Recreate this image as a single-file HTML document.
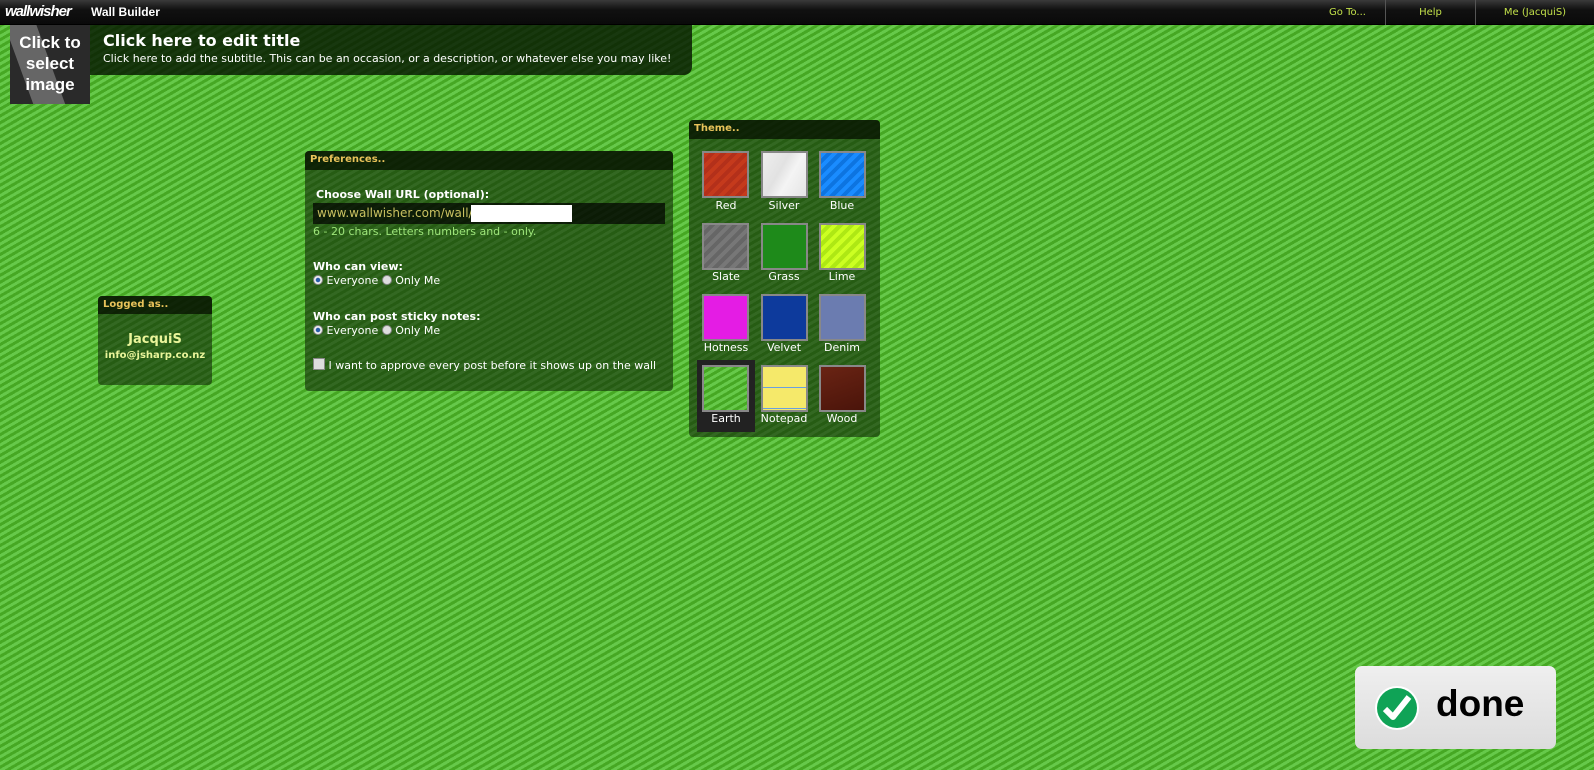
<!DOCTYPE html>
<html><head><meta charset="utf-8"><style>
*{margin:0;padding:0;box-sizing:border-box}
body{width:1594px;height:770px;overflow:hidden;font-family:"DejaVu Sans","Liberation Sans",sans-serif;
background:repeating-linear-gradient(150deg,#66c94a 0 3px,#46a823 3px 6px);position:relative}
.top{position:absolute;left:0;top:0;width:1594px;height:25px;background:linear-gradient(#3a3a3a,#111 40%,#0a0a0a);border-bottom:1px solid #000}
.logo{position:absolute;left:5px;top:3px;color:#fff;font:bold italic 15px "Liberation Sans",sans-serif;letter-spacing:-1px}
.wb{position:absolute;left:91px;top:5px;color:#fff;font:bold 12px "Liberation Sans",sans-serif}
.nav{position:absolute;top:0;height:25px;color:#c2e04a;font-size:10px;line-height:25px;text-align:center;border-left:1px solid #555}
.panel{position:absolute;background:rgba(20,45,10,.62);border-radius:4px;color:#fff}
.ph{height:18px;background:rgba(5,15,0,.75);color:#e8c35a;font-weight:bold;font-size:10px;line-height:18px;padding-left:5px;border-radius:4px 4px 0 0}
.sw{position:absolute;width:47px;height:47px;border:2px solid #888}
.lab{position:absolute;width:58px;text-align:center;font-size:11px;color:#fff}
.rad{display:inline-block;width:10px;height:10px;border-radius:50%;background:#ddd;border:1px solid #888;vertical-align:-1px}
.rad.on{background:radial-gradient(#2a5ea8 35%,#eee 45%)}
</style></head><body>
<div class="top">
<div class="logo">wallwisher</div><div class="wb">Wall Builder</div>
<div class="nav" style="left:1280px;width:105px;border:none;padding-left:30px">Go To...</div>
<div class="nav" style="left:1385px;width:90px">Help</div>
<div class="nav" style="left:1475px;width:119px">Me (JacquiS)</div>
</div>
<div style="position:absolute;left:90px;top:25px;width:602px;height:50px;background:rgba(5,20,0,.8);border-radius:0 0 8px 0"></div>
<div style="position:absolute;left:103px;top:31px;color:#fff;font-weight:bold;font-size:16px">Click here to edit title</div>
<div style="position:absolute;left:103px;top:52px;color:#fff;font-size:11px">Click here to add the subtitle. This can be an occasion, or a description, or whatever else you may like!</div>
<div style="position:absolute;left:10px;top:25px;width:80px;height:79px;background:#2a2a2a;overflow:hidden">
<div style="position:absolute;left:10px;top:-10px;width:30px;height:100px;background:#666;transform:rotate(-20deg)"></div>
<div style="position:absolute;left:0;top:7px;width:80px;text-align:center;color:#fff;font:bold 17px/21px 'Liberation Sans Narrow','Liberation Sans',sans-serif">Click to<br>select<br>image</div></div>

<div class="panel" style="left:98px;top:296px;width:114px;height:89px">
<div class="ph">Logged as..</div>
<div style="text-align:center;color:#eaf59a;font-weight:bold;font-size:13px;margin-top:18px">JacquiS</div>
<div style="text-align:center;color:#eaf59a;font-weight:bold;font-size:10px;margin-top:3px">info@jsharp.co.nz</div>
</div>

<div class="panel" style="left:305px;top:151px;width:368px;height:240px;font-size:11px">
<div class="ph" style="height:19px">Preferences..</div>
<div style="position:absolute;left:11px;top:37px;font-weight:bold">Choose Wall URL (optional):</div>
<div style="position:absolute;left:8px;top:52px;width:352px;height:21px;background:rgba(0,0,0,.7);color:#c8c060;font-size:12px;line-height:21px;padding-left:4px">www.wallwisher.com/wall/<span style="position:absolute;left:158px;top:2px;width:101px;height:17px;background:#fff"></span></div>
<div style="position:absolute;left:8px;top:74px;color:#9ee67a">6 - 20 chars. Letters numbers and - only.</div>
<div style="position:absolute;left:8px;top:109px;font-weight:bold">Who can view:</div>
<div style="position:absolute;left:8px;top:123px"><span class="rad on"></span> Everyone <span class="rad"></span> Only Me</div>
<div style="position:absolute;left:8px;top:159px;font-weight:bold">Who can post sticky notes:</div>
<div style="position:absolute;left:8px;top:173px"><span class="rad on"></span> Everyone <span class="rad"></span> Only Me</div>
<div style="position:absolute;left:8px;top:207px"><span style="display:inline-block;width:12px;height:12px;background:#ddd;border:1px solid #888;vertical-align:-1px"></span> I want to approve every post before it shows up on the wall</div>
</div>

<div class="panel" style="left:689px;top:120px;width:191px;height:317px">
<div class="ph" style="height:19px">Theme..</div>
<div style="position:absolute;left:8px;top:240px;width:58px;height:72px;background:#222"></div>
<div class="sw" style="left:13px;top:31px;background:repeating-linear-gradient(135deg,#c53a1c 0 4px,#b3301a 4px 8px)"></div>
<div class="sw" style="left:72px;top:31px;background:linear-gradient(120deg,#eee,#e2e2e2 40%,#f4f4f4 60%,#e4e4e4)"></div>
<div class="sw" style="left:130px;top:31px;background:repeating-linear-gradient(135deg,#1a8cff 0 4px,#0d74e0 4px 8px)"></div>
<div class="sw" style="left:13px;top:103px;background:repeating-linear-gradient(135deg,#777 0 4px,#666 4px 8px)"></div>
<div class="sw" style="left:72px;top:103px;background:#1e8a1a"></div>
<div class="sw" style="left:130px;top:103px;background:repeating-linear-gradient(135deg,#ccff22 0 4px,#aee814 4px 8px)"></div>
<div class="sw" style="left:13px;top:174px;background:#e41ce4"></div>
<div class="sw" style="left:72px;top:174px;background:#0d3a9c"></div>
<div class="sw" style="left:130px;top:174px;background:#6b7cb0"></div>
<div class="sw" style="left:13px;top:245px;background:repeating-linear-gradient(150deg,#66c94a 0 3px,#46a823 3px 6px)"></div>
<div class="sw" style="left:72px;top:245px;background:linear-gradient(#f5e96a 0 20px,#6aa0e0 20px 21px,#f5e96a 21px 41px,#6aa0e0 41px 42px,#f5e96a 42px)"></div>
<div class="sw" style="left:130px;top:245px;background:linear-gradient(160deg,#6a2414,#4a140a)"></div>
<div class="lab" style="left:8px;top:79px">Red</div><div class="lab" style="left:66px;top:79px">Silver</div><div class="lab" style="left:124px;top:79px">Blue</div>
<div class="lab" style="left:8px;top:150px">Slate</div><div class="lab" style="left:66px;top:150px">Grass</div><div class="lab" style="left:124px;top:150px">Lime</div>
<div class="lab" style="left:8px;top:221px">Hotness</div><div class="lab" style="left:66px;top:221px">Velvet</div><div class="lab" style="left:124px;top:221px">Denim</div>
<div class="lab" style="left:8px;top:292px">Earth</div><div class="lab" style="left:66px;top:292px">Notepad</div><div class="lab" style="left:124px;top:292px">Wood</div>
</div>

<div style="position:absolute;left:1355px;top:666px;width:201px;height:83px;border-radius:7px;background:linear-gradient(#efefef,#dcdcdc)">
<svg style="position:absolute;left:19px;top:19px" width="46" height="46" viewBox="0 0 46 46"><circle cx="23" cy="23" r="22" fill="#fff"/><circle cx="23" cy="23" r="20" fill="#0fa356"/><path d="M11 24 L19 32 L35 12" stroke="#fff" stroke-width="6" fill="none" stroke-linejoin="round"/></svg>
<div style="position:absolute;left:81px;top:17px;font:bold 37px 'Liberation Sans',sans-serif;color:#000">done</div>
</div>
</body></html>
